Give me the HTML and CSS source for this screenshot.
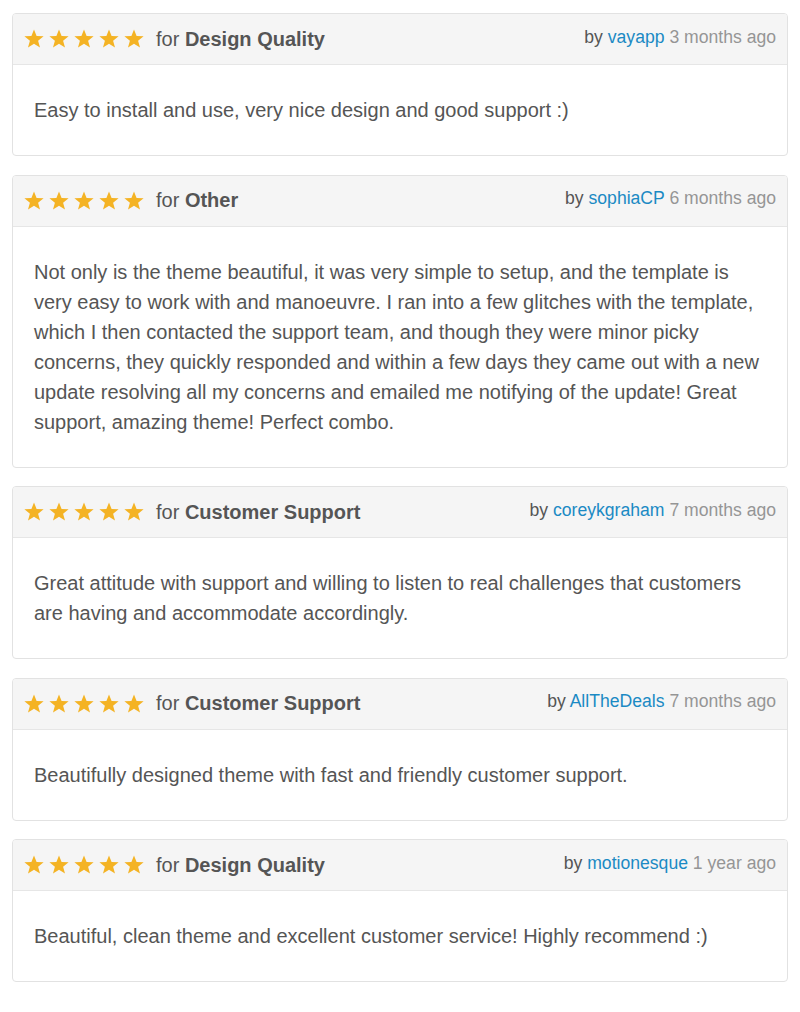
FILE: index.html
```html
<!DOCTYPE html>
<html>
<head>
<meta charset="utf-8">
<link rel="stylesheet" href="styles.css">
</head>
<body>
<svg width="0" height="0" class="defs">
  <defs>
    <symbol id="star" viewBox="0 0 20 20">
      <polygon points="10,0.6 12.6,7 19.6,7.3 14.1,11.7 16,18.6 10,14.7 4,18.6 5.9,11.7 0.4,7.3 7.4,7" />
    </symbol>
  </defs>
</svg>
<main class="reviews">

  <article class="review">
    <header class="review-head">
      <div class="rating">
        <span class="stars">
          <svg class="star"><use href="#star"/></svg><svg class="star"><use href="#star"/></svg><svg class="star"><use href="#star"/></svg><svg class="star"><use href="#star"/></svg><svg class="star"><use href="#star"/></svg>
        </span>
        <span class="for">for <b>Design Quality</b></span>
      </div>
      <div class="meta">by <a class="user">vayapp</a> <span class="time">3 months ago</span></div>
    </header>
    <div class="review-body">Easy to install and use, very nice design and good support :)</div>
  </article>

  <article class="review">
    <header class="review-head">
      <div class="rating">
        <span class="stars">
          <svg class="star"><use href="#star"/></svg><svg class="star"><use href="#star"/></svg><svg class="star"><use href="#star"/></svg><svg class="star"><use href="#star"/></svg><svg class="star"><use href="#star"/></svg>
        </span>
        <span class="for">for <b>Other</b></span>
      </div>
      <div class="meta">by <a class="user">sophiaCP</a> <span class="time">6 months ago</span></div>
    </header>
    <div class="review-body">Not only is the theme beautiful, it was very simple to setup, and the template is very easy to work with and manoeuvre. I ran into a few glitches with the template, which I then contacted the support team, and though they were minor picky concerns, they quickly responded and within a few days they came out with a new update resolving all my concerns and emailed me notifying of the update! Great support, amazing theme! Perfect combo.</div>
  </article>

  <article class="review">
    <header class="review-head">
      <div class="rating">
        <span class="stars">
          <svg class="star"><use href="#star"/></svg><svg class="star"><use href="#star"/></svg><svg class="star"><use href="#star"/></svg><svg class="star"><use href="#star"/></svg><svg class="star"><use href="#star"/></svg>
        </span>
        <span class="for">for <b>Customer Support</b></span>
      </div>
      <div class="meta">by <a class="user">coreykgraham</a> <span class="time">7 months ago</span></div>
    </header>
    <div class="review-body">Great attitude with support and willing to listen to real challenges that customers are having and accommodate accordingly.</div>
  </article>

  <article class="review">
    <header class="review-head">
      <div class="rating">
        <span class="stars">
          <svg class="star"><use href="#star"/></svg><svg class="star"><use href="#star"/></svg><svg class="star"><use href="#star"/></svg><svg class="star"><use href="#star"/></svg><svg class="star"><use href="#star"/></svg>
        </span>
        <span class="for">for <b>Customer Support</b></span>
      </div>
      <div class="meta">by <a class="user">AllTheDeals</a> <span class="time">7 months ago</span></div>
    </header>
    <div class="review-body">Beautifully designed theme with fast and friendly customer support.</div>
  </article>

  <article class="review">
    <header class="review-head">
      <div class="rating">
        <span class="stars">
          <svg class="star"><use href="#star"/></svg><svg class="star"><use href="#star"/></svg><svg class="star"><use href="#star"/></svg><svg class="star"><use href="#star"/></svg><svg class="star"><use href="#star"/></svg>
        </span>
        <span class="for">for <b>Design Quality</b></span>
      </div>
      <div class="meta">by <a class="user">motionesque</a> <span class="time">1 year ago</span></div>
    </header>
    <div class="review-body">Beautiful, clean theme and excellent customer service! Highly recommend :)</div>
  </article>

</main>
</body>
</html>
```

FILE: styles.css
```css
html, body {
  margin: 0;
  padding: 0;
  background: #ffffff;
}

body {
  font-family: "Liberation Sans", Arial, sans-serif;
  color: #555555;
}

.defs {
  position: absolute;
  width: 0;
  height: 0;
  overflow: hidden;
}

.reviews {
  padding: 13px 12px 0 12px;
  display: flex;
  flex-direction: column;
  gap: 18.5px;
}

.review {
  border: 1px solid #e2e2e2;
  border-radius: 4px;
  background: #ffffff;
  overflow: hidden;
}

.review-head {
  height: 50px;
  background: #f5f5f5;
  border-bottom: 1px solid #e6e6e6;
  display: flex;
  align-items: center;
  justify-content: space-between;
  padding: 0 11px;
}

.rating {
  display: flex;
  align-items: center;
}

.stars {
  display: flex;
  gap: 5px;
  margin-right: 12px;
}

.star {
  width: 20px;
  height: 20px;
  fill: #f4b324;
  display: block;
}

.for {
  font-size: 20px;
  color: #555555;
}

.for b {
  font-weight: bold;
}

.meta {
  font-size: 17.6px;
  color: #555555;
  margin-bottom: 4px;
}

.user {
  color: #1b8ac4;
  text-decoration: none;
}

.time {
  color: #959595;
}

.review-body {
  padding: 30px 22px 30px 21px;
  font-size: 20px;
  line-height: 30px;
  color: #555555;
}
```
